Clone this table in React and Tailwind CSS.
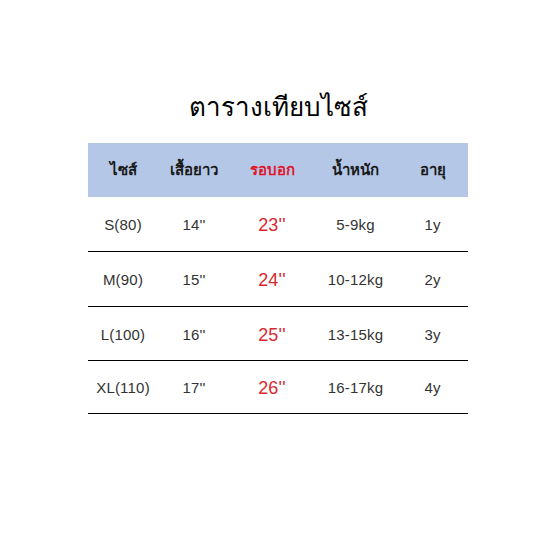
import React from 'react';

const rows = [
  { size: 'S(80)', length: "14''", chest: "23''", weight: '5-9kg', age: '1y', h: 'h-[55px]' },
  { size: 'M(90)', length: "15''", chest: "24''", weight: '10-12kg', age: '2y', h: 'h-[55px]' },
  { size: 'L(100)', length: "16''", chest: "25''", weight: '13-15kg', age: '3y', h: 'h-[54px]' },
  { size: 'XL(110)', length: "17''", chest: "26''", weight: '16-17kg', age: '4y', h: 'h-[53px]' },
];

const cols = ['w-[70px]', 'w-[72px]', 'w-[84px]', 'w-[83px]', 'w-[71px]'];

export default function App() {
  return (
    <div className="w-[550px] h-[550px] bg-white flex flex-col items-center pt-[88px] pl-[6px] text-[#222] font-['Liberation_Sans','Noto_Sans','DejaVu_Sans',sans-serif]">
      <h1 className="text-[26px] leading-[38px] text-black">ตารางเทียบไซส์</h1>

      <div className="mt-[17px] w-[380px]">
        {/* header band */}
        <div className="flex h-[54px] items-center bg-[#b4c7e7] text-[15px] font-bold text-[#1a1a1a]">
          <div className={`${cols[0]} text-center`}>ไซส์</div>
          <div className={`${cols[1]} text-center`}>เสื้อยาว</div>
          <div className={`${cols[2]} text-center text-[#e0162b]`}>รอบอก</div>
          <div className={`${cols[3]} text-center`}>น้ำหนัก</div>
          <div className={`${cols[4]} text-center`}>อายุ</div>
        </div>

        {rows.map((r) => (
          <div key={r.size} className={`flex ${r.h} items-center pt-[3px] border-b border-black text-[15px] tracking-[0.2px] text-[#333]`}>
            <div className={`${cols[0]} text-center`}>{r.size}</div>
            <div className={`${cols[1]} text-center`}>{r.length}</div>
            <div className={`${cols[2]} text-center text-[18px] text-[#d9272e]`}>{r.chest}</div>
            <div className={`${cols[3]} text-center`}>{r.weight}</div>
            <div className={`${cols[4]} text-center`}>{r.age}</div>
          </div>
        ))}
      </div>
    </div>
  );
}
